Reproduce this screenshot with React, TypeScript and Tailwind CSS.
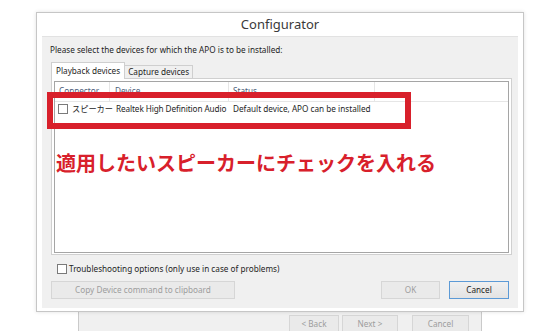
import React from 'react';

const ui = "font-['Noto_Sans','Noto_Sans_CJK_JP',sans-serif]";

const Checkbox: React.FC = () => (
  <span className="inline-block w-[10px] h-[10px] border border-[#7a7a7a] bg-white shrink-0" />
);

const WinButton: React.FC<{ label: string; width: string; disabled?: boolean; focused?: boolean }> = ({
  label,
  width,
  disabled,
  focused,
}) => (
  <div
    className={`${width} h-[18px] flex items-center justify-center text-[8.2px] whitespace-nowrap border ${
      disabled
        ? 'bg-[#eaeaea] border-[#d6d6d6] text-[#9d9d9d]'
        : focused
        ? 'bg-gradient-to-b from-[#f0f0f0] to-[#e3e3e3] border-[#5c9ad6] text-[#222]'
        : 'bg-gradient-to-b from-[#f2f2f2] to-[#e6e6e6] border-[#b5b5b5] text-[#333]'
    }`}
  >
    {label}
  </div>
);

const App: React.FC = () => {
  return (
    <div className={`relative w-[550px] h-[331px] bg-white overflow-hidden ${ui}`}>
      {/* Wizard window behind */}
      <div className="absolute left-[78px] top-[250px] w-[404px] h-[100px] bg-[#f0f0f0] border border-[#cacaca]">
        <div className="flex pt-[64px] pl-[210px] gap-[3px]">
          <WinButton label="< Back" width="w-[50px]" disabled />
          <WinButton label="Next >" width="w-[56px]" disabled />
          <div className="w-[8px]" />
          <WinButton label="Cancel" width="w-[57px]" disabled />
        </div>
      </div>

      {/* Configurator dialog */}
      <div className="absolute left-[36px] top-[12px] w-[488px] h-[300px] bg-white border border-[#c6c6c6] shadow-[0_0_4px_rgba(0,0,0,0.12)] flex flex-col px-[5px] pb-[3px]">
        <div className="h-[23px] flex items-center justify-center text-[13px] text-[#3a3a3a]">Configurator</div>
        <div className="flex-1 bg-[#f0f0f0] border-t border-[#e2e2e2] flex flex-col pl-[9px] pr-[6px] pt-[6px] text-[8.2px] text-[#1e1e1e] whitespace-nowrap">
          <div className="h-[14px] leading-[14px] -ml-[1px]">Please select the devices for which the APO is to be installed:</div>

          {/* Tabs */}
          <div className="mt-[5px] flex items-end h-[17px] relative z-10">
            <div className="h-[17px] px-[4px] bg-white border border-b-0 border-[#cfcfcf] flex items-center">
              Playback devices
            </div>
            <div className="h-[14px] px-[3px] bg-[#f0f0f0] border border-l-0 border-[#cfcfcf] flex items-center">
              Capture devices
            </div>
          </div>

          {/* Tab panel */}
          <div className="-mt-[1px] h-[177px] bg-white border border-[#d0d0d0] pt-[2px] px-[2px] pb-[1px]">
            <div className="h-full border border-[#a5a5a5] bg-white flex flex-col">
              <div className="h-[20px] shrink-0 flex items-center border-b border-[#e6e6e6] text-[#4c607a]">
                <div className="w-[55px] h-full flex items-center pl-[4px] border-r border-[#e6e6e6]">Connector</div>
                <div className="w-[119px] h-full flex items-center pl-[5px] border-r border-[#e6e6e6]">Device</div>
                <div className="w-[146px] h-full flex items-center pl-[4px] border-r border-[#e6e6e6]">Status</div>
              </div>
              <div className="h-[15px] shrink-0 flex items-center">
                <div className="w-[56px] shrink-0 flex items-center pl-[3px] gap-[4px]">
                  <Checkbox />
                  <span>スピーカー</span>
                </div>
                <div className="w-[119px] shrink-0 pl-[5px] tracking-[-0.1px]">Realtek High Definition Audio</div>
                <div className="pl-[3px]">Default device, APO can be installed</div>
              </div>
            </div>
          </div>

          <div className="mt-[8px] h-[12px] flex items-center gap-[2px] pl-[6px]">
            <Checkbox />
            <span>Troubleshooting options (only use in case of problems)</span>
          </div>

          <div className="mt-[6px] mr-[3px] flex items-center">
            <WinButton label="Copy Device command to clipboard" width="w-[184px]" disabled />
            <div className="flex-1" />
            <WinButton label="OK" width="w-[59px]" disabled />
            <div className="w-[9px]" />
            <WinButton label="Cancel" width="w-[60px]" focused />
          </div>
        </div>
      </div>

      {/* Annotation overlay */}
      <div className="absolute left-[47px] top-[92px] w-[364px] h-[37px] border-[6px] border-[#d8202b]" />
      <div className="absolute left-[56px] top-[150px] text-[20px] leading-[26px] font-bold text-[#d8202b] font-['Noto_Sans_CJK_JP',sans-serif]">
        適用したいスピーカーにチェックを入れる
      </div>
    </div>
  );
};

export default App;
